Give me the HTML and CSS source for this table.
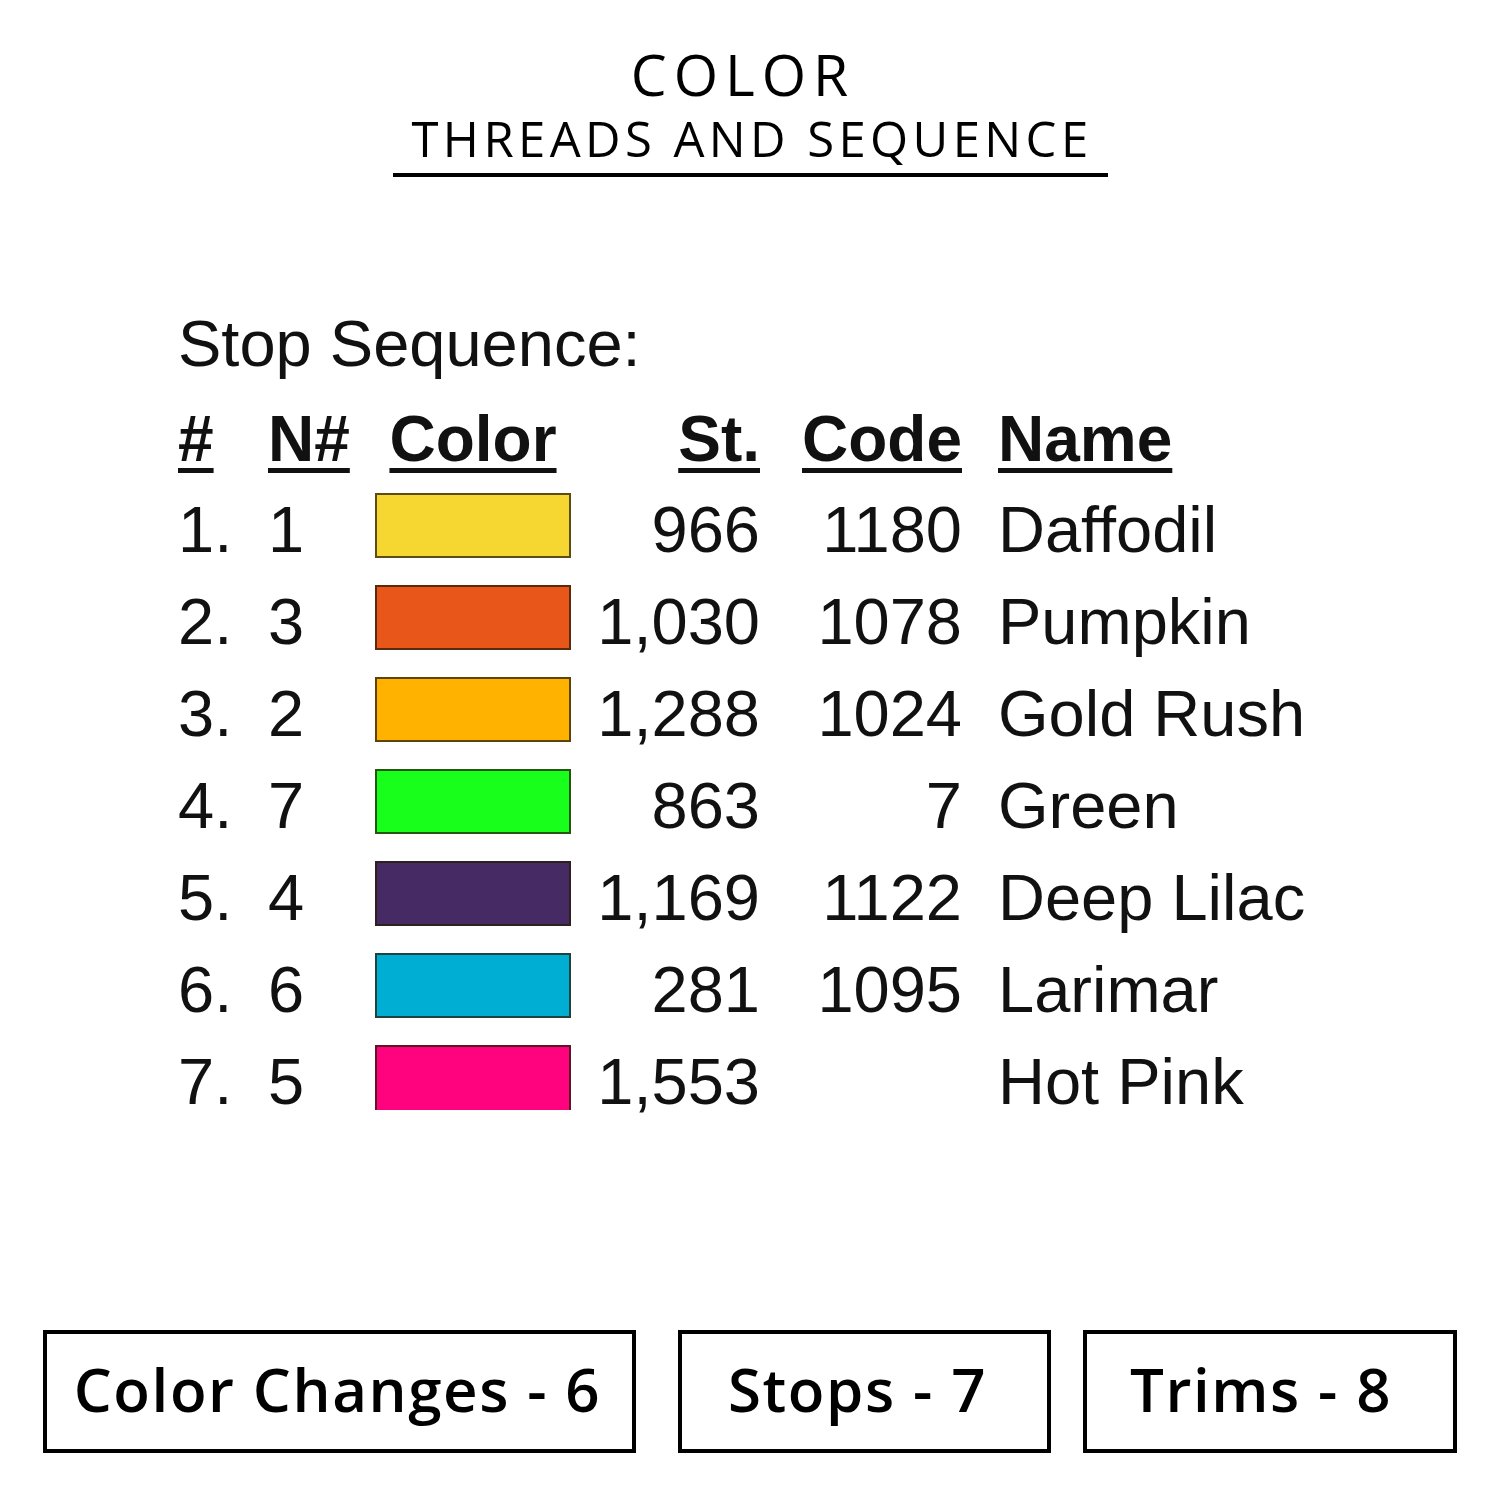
FILE: index.html
```html
<!DOCTYPE html>
<html>
<head>
<meta charset="utf-8">
<link rel="stylesheet" href="styles.css">
</head>
<body>
<div class="page">
  <header class="title">
    <div class="title-main">COLOR</div>
    <div class="title-sub">THREADS AND SEQUENCE</div>
  </header>

  <section class="sequence">
    <div class="seq-caption">Stop Sequence:</div>
    <div class="seq-table">
      <div class="th">#</div>
      <div class="th">N#</div>
      <div class="th th-color">Color</div>
      <div class="th num">St.</div>
      <div class="th num">Code</div>
      <div class="th name">Name</div>

      <div class="td">1.</div><div class="td">1</div>
      <div class="swatch sw-yellow"></div>
      <div class="td num">966</div><div class="td num">1180</div><div class="td name">Daffodil</div>

      <div class="td">2.</div><div class="td">3</div>
      <div class="swatch sw-orange"></div>
      <div class="td num">1,030</div><div class="td num">1078</div><div class="td name">Pumpkin</div>

      <div class="td">3.</div><div class="td">2</div>
      <div class="swatch sw-gold"></div>
      <div class="td num">1,288</div><div class="td num">1024</div><div class="td name">Gold Rush</div>

      <div class="td">4.</div><div class="td">7</div>
      <div class="swatch sw-green"></div>
      <div class="td num">863</div><div class="td num">7</div><div class="td name">Green</div>

      <div class="td">5.</div><div class="td">4</div>
      <div class="swatch sw-purple"></div>
      <div class="td num">1,169</div><div class="td num">1122</div><div class="td name">Deep Lilac</div>

      <div class="td">6.</div><div class="td">6</div>
      <div class="swatch sw-cyan"></div>
      <div class="td num">281</div><div class="td num">1095</div><div class="td name">Larimar</div>

      <div class="td">7.</div><div class="td">5</div>
      <div class="swatch sw-pink swatch-last"></div>
      <div class="td num">1,553</div><div class="td num"></div><div class="td name">Hot Pink</div>
    </div>
  </section>

  <footer class="stats">
    <div class="stat stat-wide">Color Changes - 6</div>
    <div class="stat stat-mid">Stops - 7</div>
    <div class="stat stat-last">Trims - 8</div>
  </footer>
</div>
</body>
</html>
```

FILE: styles.css
```css
html, body {
  margin: 0;
  padding: 0;
  background: #fff;
}

.page {
  width: 1500px;
  height: 1500px;
  overflow: hidden;
  background: #fff;
  color: #000;
}

/* Title */
.title {
  width: 715px;
  margin: 43px auto 0;
  padding-bottom: 9px;
  border-bottom: 4px solid #000;
  text-align: center;
  font-family: "Open Sans", "Noto Sans", sans-serif;
  color: #000;
}

.title-main {
  font-size: 57px;
  line-height: 62px;
  font-weight: 500;
  letter-spacing: 7px;
  margin-right: 14px;
}

.title-sub {
  margin-top: 7px;
  font-size: 49px;
  line-height: 52px;
  font-weight: 400;
  letter-spacing: 4.4px;
  margin-left: 4px;
}

/* Sequence table */
.sequence {
  margin: 121px 0 0 178px;
  font-family: "Liberation Sans", Arial, sans-serif;
  color: #111;
  font-size: 65px;
}

.seq-caption {
  line-height: 92px;
  height: 92px;
  margin-bottom: 5px;
  font-size: 65px;
}

.seq-table {
  display: grid;
  grid-template-columns: 90px 107px 196px 189px 202px 1fr;
  grid-template-rows: 89px;
  grid-auto-rows: 92px;
  line-height: 92px;
}

.th {
  font-weight: 700;
  font-size: 64px;
  line-height: 89px;
  text-decoration: underline;
  text-decoration-thickness: 5px;
  text-underline-offset: 7px;
  white-space: nowrap;
}

.th-color {
  justify-self: center;
}

.td {
  white-space: nowrap;
}

.num {
  text-align: right;
}

.name {
  padding-left: 36px;
}

.swatch {
  align-self: start;
  margin-top: 9px;
  height: 65px;
  box-sizing: border-box;
  border: 2px solid rgba(40, 30, 10, 0.75);
}

.swatch-last {
  border-bottom: none;
}

.sw-yellow { background: #f6d631; }
.sw-orange { background: #e8561a; }
.sw-gold   { background: #ffb200; }
.sw-green  { background: #19ff1c; }
.sw-purple { background: #452a63; }
.sw-cyan   { background: #00aed4; }
.sw-pink   { background: #ff037f; }

/* Stats */
.stats {
  display: flex;
  margin: 202px 0 0 43px;
}

.stat {
  box-sizing: border-box;
  height: 123px;
  border: 4px solid #000;
  display: flex;
  align-items: center;
  justify-content: center;
  padding-bottom: 6px;
  font-family: "Open Sans", "Noto Sans", sans-serif;
  font-weight: 600;
  font-size: 60px;
  letter-spacing: 1.6px;
  color: #000;
  white-space: nowrap;
}

.stat-wide { width: 593px; padding-right: 4px; }
.stat-mid  { width: 373px; margin-left: 42px; padding-right: 14px; }
.stat-last { width: 374px; margin-left: 32px; padding-right: 18px; }
```
